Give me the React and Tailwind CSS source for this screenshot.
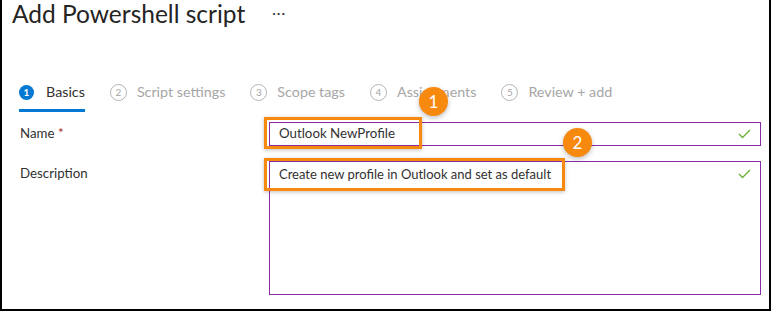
import React from "react";

const font = { fontFamily: 'Lato, "Noto Sans", sans-serif' };

function Step({ n, label, active }) {
  return (
    <div className="flex flex-col">
      <div className="flex items-center h-[20px]">
        {active ? (
          <span className="w-[15px] h-[15px] rounded-full bg-[#0078d4] text-white text-[10px] font-bold flex items-center justify-center leading-none">
            {n}
          </span>
        ) : (
          <span className="w-[17px] h-[17px] rounded-full border border-[#b3b3b3] text-[#a6a6a6] text-[10px] flex items-center justify-center leading-none">
            {n}
          </span>
        )}
        <span
          className={
            "text-[14.3px] leading-none " +
            (active ? "ml-[12px] text-[#323130]" : "ml-[10px] text-[#a6a6a6]")
          }
        >
          {label}
        </span>
      </div>
      <div className={"mt-[7px] h-[3px] " + (active ? "bg-[#0078d4]" : "bg-transparent")} />
    </div>
  );
}

function Check() {
  return (
    <svg width="13" height="10" viewBox="0 0 13 10" className="shrink-0">
      <path d="M1 5 L4.5 8.5 L12 1" fill="none" stroke="#6bb33a" strokeWidth="1.4" />
    </svg>
  );
}

function Badge({ n, className }) {
  return (
    <div
      className={
        "absolute w-[29px] h-[29px] rounded-full bg-[#f7890f] text-white text-[17px] flex items-center justify-center shadow-[0_2px_5px_rgba(0,0,0,0.25)] " +
        className
      }
    >
      {n}
    </div>
  );
}

export default function App() {
  return (
    <div
      className="relative w-[771px] h-[311px] bg-white border-l-2 border-r-2 border-b-2 border-black overflow-hidden"
      style={font}
    >
      <div className="flex items-center pl-[10px] h-[28px]">
        <h1 className="text-[24.5px] leading-[28px] text-[#252423]">Add Powershell script</h1>
        <span className="ml-[27px] text-[14px] leading-none text-[#323130] -mt-[2px] tracking-[1px]">···</span>
      </div>

      <div className="flex items-start pl-[17px] mt-[54px] gap-[25px]">
        <Step n={1} label="Basics" active />
        <Step n={2} label="Script settings" />
        <Step n={3} label="Scope tags" />
        <Step n={4} label="Assignments" />
        <Step n={5} label="Review + add" />
      </div>

      <div className="flex flex-col pl-[18px] pr-[8px] mt-[10px]">
        <div className="flex items-center">
          <div className="w-[249px] text-[13.3px] text-[#323130]">
            Name <span className="text-[#a4262c]">*</span>
          </div>
          <div className="flex-1 h-[24px] border border-[#8a2da5] flex items-center pl-[9px] pr-[9px]">
            <span className="flex-1 text-[13.3px] text-[#323130]">Outlook NewProfile</span>
            <Check />
          </div>
        </div>
        <div className="flex items-start mt-[15px]">
          <div className="w-[249px] text-[13.3px] text-[#323130] pt-[3px]">Description</div>
          <div className="flex-1 h-[134px] border border-[#8a2da5] flex items-start pl-[9px] pr-[9px] pt-[3px]">
            <span className="flex-1 text-[13px] text-[#323130]">
              Create new profile in Outlook and set as default
            </span>
            <span className="pt-[4px]">
              <Check />
            </span>
          </div>
        </div>
      </div>

      <div className="absolute left-[262px] top-[117px] w-[158px] h-[32px] border-[3px] border-[#f7890f] shadow-[0_1px_4px_rgba(0,0,0,0.25)]" />
      <div className="absolute left-[262px] top-[158px] w-[301px] h-[33px] border-[3px] border-[#f7890f] shadow-[0_1px_4px_rgba(0,0,0,0.25)]" />
      <Badge n={1} className="left-[417px] top-[87px]" />
      <Badge n={2} className="left-[561px] top-[128px]" />
    </div>
  );
}
